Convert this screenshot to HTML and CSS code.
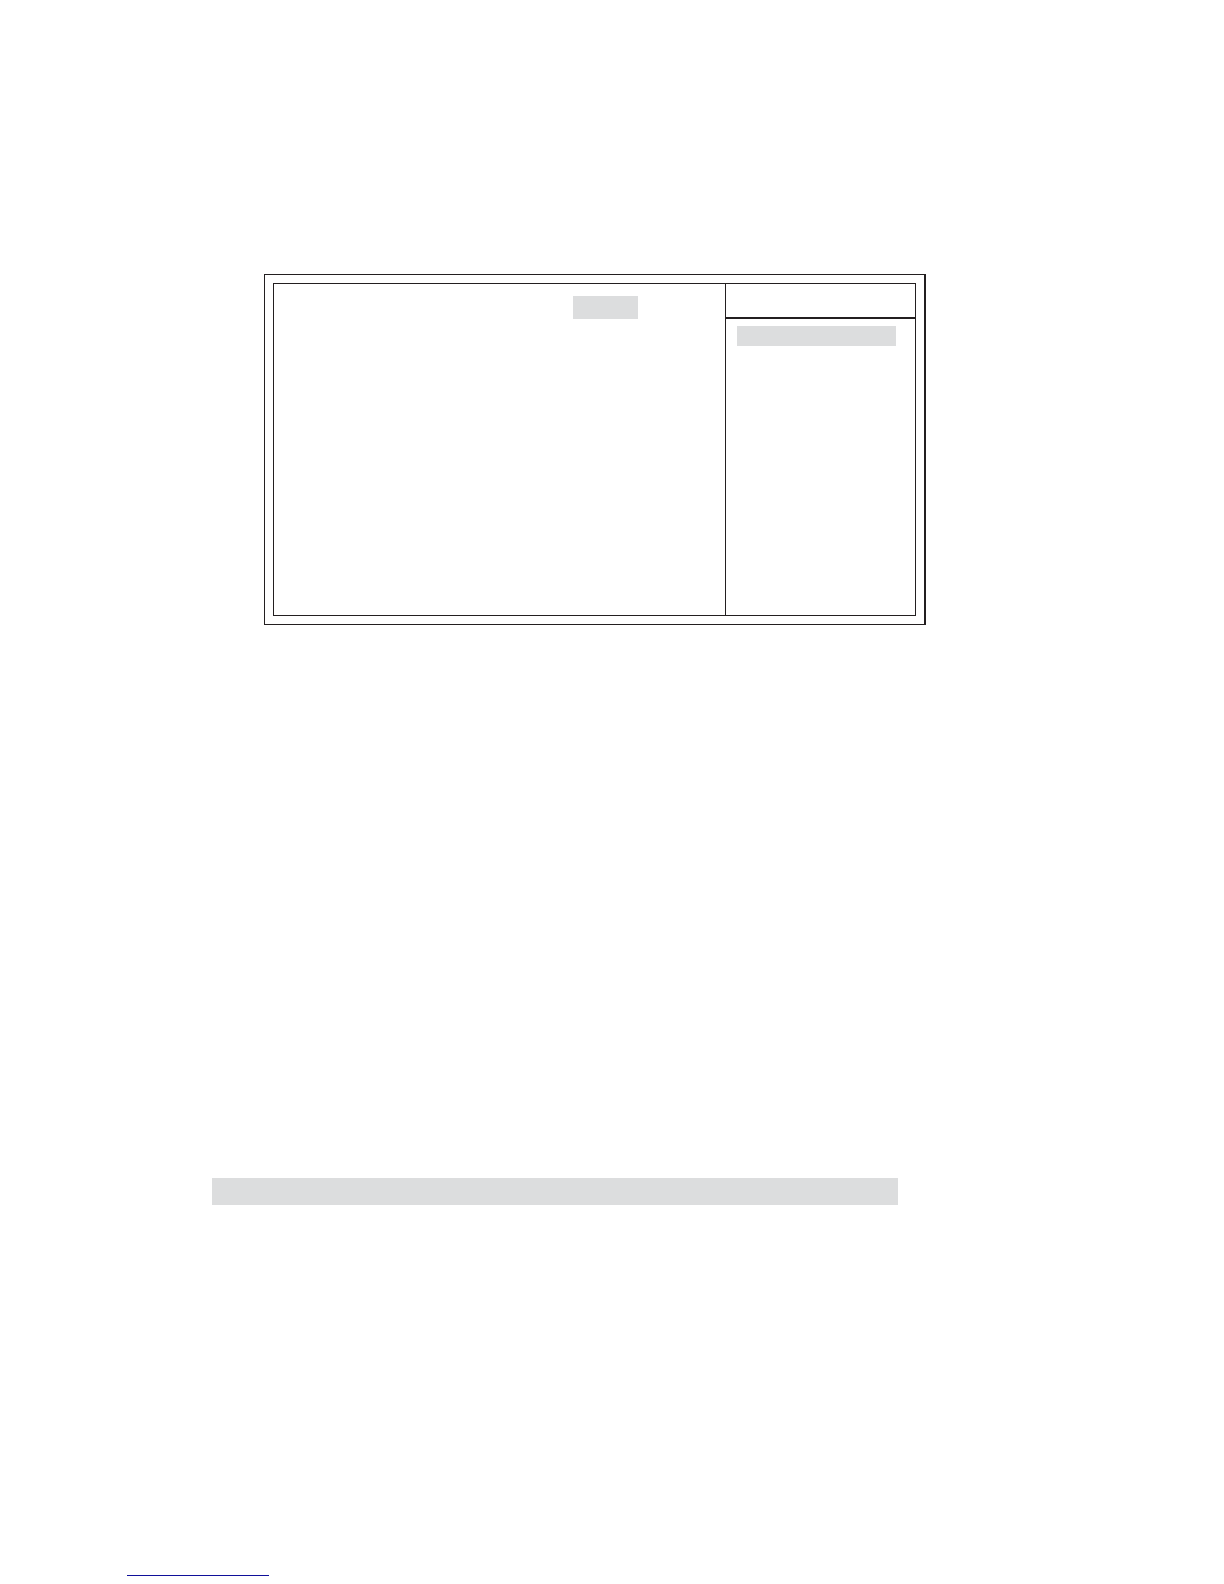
FILE: index.html
```html
<!DOCTYPE html>
<html lang="en">
<head>
    <meta charset="UTF-8">
    <meta name="viewport" content="width=device-width, initial-scale=1.0">
    <title>Setup Screen</title>
    <link rel="stylesheet" href="styles.css">
</head>
<body>
    <main class="page">
        <!-- Setup screen frame -->
        <section class="screen">
            <div class="screen-inner">
                <div class="options">
                    <div class="option-value"></div>
                </div>
                <aside class="help">
                    <div class="help-header"></div>
                    <div class="help-item"></div>
                </aside>
            </div>
        </section>

        <!-- Highlighted row -->
        <div class="table-header"></div>
    </main>

    <footer class="footer">
        <hr class="footer-line">
    </footer>
</body>
</html>
```

FILE: styles.css
```css
* {
    box-sizing: border-box;
}

body {
    font-family: "Liberation Sans", Arial, sans-serif;
    background-color: #fff;
    margin: 0;
    min-height: 100vh;
    display: flex;
    flex-direction: column;
    justify-content: space-between;
}

.page {
    padding-top: 274px;
}

/* Double frame, heavier on the right side */
.screen {
    margin: 0 298px 0 264px;
    padding: 8px;
    border: 1px solid #231f20;
    border-right-width: 2px;
}

.screen-inner {
    display: flex;
    min-height: 333px;
    border: 1px solid #231f20;
}

.options {
    flex: 1;
    padding: 12px 87px 12px 12px;
}

.option-value {
    width: 65px;
    height: 23px;
    margin-left: auto;
    background-color: #dcddde;
}

.help {
    width: 190px;
    border-left: 1px solid #231f20;
}

.help-header {
    height: 35px;
    border-bottom: 2px solid #231f20;
}

.help-item {
    height: 20px;
    margin: 7px 19px 0 11px;
    background-color: #dcddde;
}

.table-header {
    height: 27px;
    margin: 553px 326px 0 212px;
    background-color: #dcddde;
}

.footer {
    padding: 0 127px 8px;
}

.footer-line {
    width: 142px;
    margin: 0;
    border: none;
    border-top: 1px solid #10109a;
}
```
